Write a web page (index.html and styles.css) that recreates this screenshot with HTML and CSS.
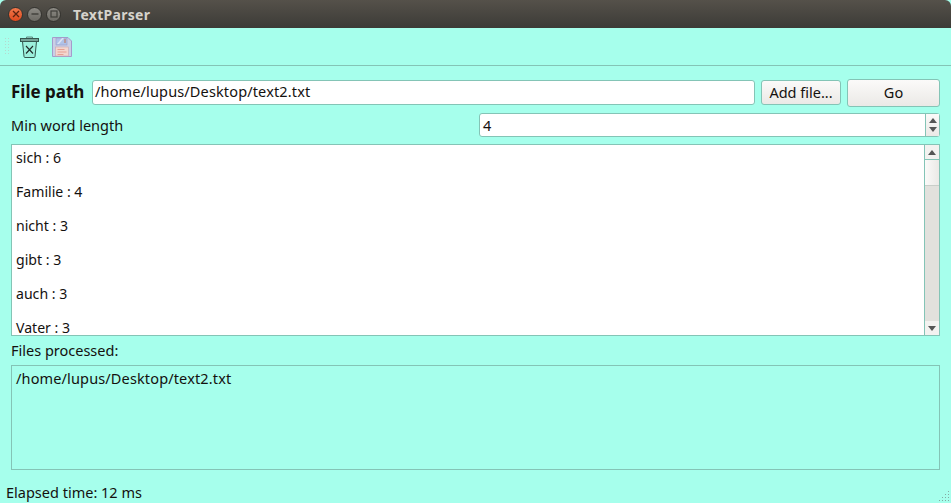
FILE: index.html
```html
<!DOCTYPE html>
<html lang="en">
<head>
<meta charset="utf-8">
<title>TextParser</title>
<link rel="stylesheet" href="styles.css">
</head>
<body>
<div class="window">
  <header class="titlebar">
    <div class="controls">
      <span class="ctl close"><svg width="8" height="8" viewBox="0 0 8 8"><path d="M1 1l6 6M7 1l-6 6" stroke="#5a2310" stroke-width="1.3"/></svg></span>
      <span class="ctl"><svg width="8" height="8" viewBox="0 0 8 8"><path d="M0.5 4h7" stroke="#3f3e3a" stroke-width="1.4"/></svg></span>
      <span class="ctl"><svg width="8" height="8" viewBox="0 0 8 8"><rect x="1" y="1" width="6" height="6" fill="none" stroke="#3f3e3a" stroke-width="1.2"/></svg></span>
    </div>
    <span class="title">TextParser</span>
  </header>
  <div class="toolbar">
    <svg class="grip" width="5" height="18" viewBox="0 0 5 18"><g fill="#b5d8cf"><rect x="0" y="0" width="1" height="1"/><rect x="3" y="0" width="1" height="1"/><rect x="0" y="3" width="1" height="1"/><rect x="3" y="3" width="1" height="1"/><rect x="0" y="6" width="1" height="1"/><rect x="3" y="6" width="1" height="1"/><rect x="0" y="9" width="1" height="1"/><rect x="3" y="9" width="1" height="1"/><rect x="0" y="12" width="1" height="1"/><rect x="3" y="12" width="1" height="1"/><rect x="0" y="15" width="1" height="1"/><rect x="3" y="15" width="1" height="1"/></g></svg>
    <svg class="tool trash" width="19" height="22" viewBox="0 0 19 22">
      <path d="M6.500 2.500V1h6v1.500" fill="#a6e8d8" stroke="#5d8a81" stroke-width="1"/>
      <path d="M2.500 5.500l1.500 15q.1 1 1 1h9q.9 0 1-1l1.500-15z" fill="#9cf0dc" stroke="#35574f" stroke-width="1"/>
      <rect x="0.500" y="2.500" width="18" height="3" fill="#76a398" stroke="#35574f"/>
      <path d="M6 10l7 7.500M13 10l-7 7.500" stroke="#1f2a28" stroke-width="1.100"/>
    </svg>
    <svg class="tool" width="20" height="20" viewBox="0 0 20 20">
      <path d="M.5.500h15.500l3.500 3.500v15.500H.5z" fill="#c9cfe6" stroke="#a59ccb"/>
      <rect x="4" y="1" width="11" height="7" fill="#afc2e8" stroke="#9b9cc8" stroke-width=".6"/>
      <path d="M5 7l5-6h2l-5 6z" fill="#dbe4f5"/>
      <rect x="12" y="2" width="2" height="4" fill="#b89a9a"/>
      <rect x="3.500" y="10" width="13" height="9" fill="#f3d6cf" stroke="#c9a9b0" stroke-width=".6"/>
      <path d="M5.500 12.500h7M5.500 15h9M5.500 17.500h6" stroke="#e6a092"/>
    </svg>
  </div>
  <main class="content">
    <div class="file-row">
      <label class="path-label">File path</label>
      <div class="field path-field">/home/lupus/Desktop/text2.txt</div>
      <button class="btn add">Add file...</button>
      <button class="btn go">Go</button>
    </div>
    <div class="length-row">
      <span class="text length-label">Min word length</span>
      <div class="spin">
        <span class="spin-value">4</span>
        <span class="spin-arrows"><i class="up"></i><i class="down"></i></span>
      </div>
    </div>
    <div class="list">
      <ul class="words">
        <li>sich : 6</li>
        <li>Familie : 4</li>
        <li>nicht : 3</li>
        <li>gibt : 3</li>
        <li>auch : 3</li>
        <li>Vater : 3</li>
      </ul>
      <div class="scrollbar">
        <span class="sb-btn"><i class="up"></i></span>
        <span class="sb-track"><span class="sb-thumb"></span></span>
        <span class="sb-btn"><i class="down"></i></span>
      </div>
    </div>
    <div class="text files-label">Files processed:</div>
    <div class="files-box">/home/lupus/Desktop/text2.txt</div>
  </main>
  <footer class="status">
    <span>Elapsed time: 12 ms</span>
    <svg class="size-grip" width="11" height="11" viewBox="0 0 11 11"><g fill="#86a9a2"><rect x="9" y="0" width="1" height="1"/><rect x="6" y="3" width="1" height="1"/><rect x="9" y="3" width="1" height="1"/><rect x="3" y="6" width="1" height="1"/><rect x="6" y="6" width="1" height="1"/><rect x="9" y="6" width="1" height="1"/><rect x="0" y="9" width="1" height="1"/><rect x="3" y="9" width="1" height="1"/><rect x="6" y="9" width="1" height="1"/><rect x="9" y="9" width="1" height="1"/></g></svg>
  </footer>
</div>
</body>
</html>
```
FILE: styles.css
```css
* { box-sizing: border-box; }
html, body { margin: 0; padding: 0; }
body {
  width: 951px;
  height: 503px;
  overflow: hidden;
  background: #a6ffec;
  color: #14110f;
  font-family: "Noto Sans", "Open Sans", sans-serif;
  font-size: 14.5px;
}
.window { display: flex; flex-direction: column; height: 503px; }

.titlebar {
  height: 28px;
  flex: none;
  display: flex;
  align-items: center;
  padding-left: 8px;
  background: linear-gradient(#55514a, #3c3b37);
  border-radius: 6px 6px 0 0;
}
.controls { display: flex; gap: 4px; }
.ctl {
  width: 15px;
  height: 15px;
  border-radius: 50%;
  display: flex;
  align-items: center;
  justify-content: center;
  background: linear-gradient(#8c8a84, #6c6a64);
  border: 1px solid #34332f;
}
.ctl.close { background: linear-gradient(#f2784b, #dd4a1e); }
.title {
  margin-left: 12px;
  color: #d6d3cc;
  font-weight: 700;
  font-size: 14px;
  letter-spacing: .3px;
}

.toolbar {
  height: 38px;
  flex: none;
  display: flex;
  align-items: center;
  border-bottom: 1px solid #84c4b6;
  padding-left: 5px;
}
.grip { margin-right: 10px; }
.tool { display: block; }
.trash { margin-right: 13px; }

.content {
  flex: 1;
  display: flex;
  flex-direction: column;
  padding: 12px 11px 0;
}
.file-row { display: flex; align-items: center; height: 29px; }
.path-label { font-weight: 700; font-size: 17px; width: 81px; line-height: 24px; padding-bottom: 2px; white-space: nowrap; }
.field {
  flex: 1;
  height: 25px;
  line-height: 21px;
  background: #fff;
  border: 1px solid #84c4b6;
  border-radius: 3px;
  padding-left: 2px;
  letter-spacing: .14px;
}
.btn {
  font: inherit;
  color: inherit;
  padding: 0 0 2px;
  background: linear-gradient(#fbfaf9, #ebe9e6);
  border: 1px solid #84c4b6;
  border-radius: 3px;
}
.add { width: 80px; height: 25px; margin-left: 6px; }
.go { width: 93px; height: 28px; margin-left: 6px; }

.length-row {
  display: flex;
  align-items: center;
  justify-content: space-between;
  height: 24px;
  margin-top: 6px;
}
.spin {
  width: 461px;
  height: 24px;
  display: flex;
  justify-content: space-between;
  background: #fff;
  border: 1px solid #84c4b6;
  border-radius: 3px;
}
.spin-value { padding-left: 3px; line-height: 22px; }
.spin-arrows {
  width: 14px;
  display: flex;
  flex-direction: column;
  align-items: center;
  justify-content: center;
  gap: 4px;
  background: linear-gradient(#fbfaf9, #ebe9e6);
  border-left: 1px solid #84c4b6;
}
.up, .down { display: block; width: 0; height: 0; border-left: 4px solid transparent; border-right: 4px solid transparent; }
.up { border-bottom: 5px solid #555; }
.down { border-top: 5px solid #555; }

.list {
  height: 192px;
  margin-top: 7px;
  display: flex;
  background: #fff;
  border: 1px solid #84c4b6;
  overflow: hidden;
}
.words { flex: 1; margin: 0; padding: 3px 0 0 4px; list-style: none; font-size: 14.100px; }
.words li { height: 34px; line-height: 20px; }
.scrollbar {
  width: 15px;
  display: flex;
  flex-direction: column;
  border-left: 1px solid #84c4b6;
  background: #fff;
}
.sb-btn {
  height: 14px;
  flex: none;
  display: flex;
  align-items: center;
  justify-content: center;
  background: #f3f2f0;
}
.sb-track { flex: 1; background: #e2e1dd; }
.sb-thumb {
  display: block;
  height: 27px;
  background: linear-gradient(90deg, #fbfaf9, #ebe9e6);
  border-top: 1px solid #84c4b6;
  border-bottom: 1px solid #c9cec9;
}

.files-label { height: 29px; line-height: 29px; }
.files-box {
  height: 105px;
  border: 1px solid #84c4b6;
  padding: 2px 0 0 4px;
  line-height: 20px;
  letter-spacing: .14px;
}

.status {
  flex: none;
  height: 33px;
  display: flex;
  justify-content: space-between;
  align-items: flex-end;
  padding: 0 1px 1px 6px;
  position: relative;
  line-height: 20px;
}
.size-grip { position: absolute; right: 1px; bottom: 1px; }
```
